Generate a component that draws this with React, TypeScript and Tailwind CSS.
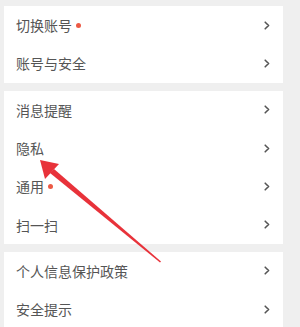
const sections: { label: string; dot?: boolean }[][] = [
  [{ label: '切换账号', dot: true }, { label: '账号与安全' }],
  [{ label: '消息提醒' }, { label: '隐私' }, { label: '通用', dot: true }, { label: '扫一扫' }],
  [{ label: '个人信息保护政策' }, { label: '安全提示' }],
];

function Chevron() {
  return (
    <svg width="6" height="9" viewBox="0 0 6 9" className="shrink-0">
      <path d="M1.2 1.2 L4.6 4.5 L1.2 7.8" fill="none" stroke="#555" strokeWidth="1.6" strokeLinecap="round" strokeLinejoin="round" />
    </svg>
  );
}

export default function App() {
  return (
    <div className="relative w-[300px] h-[327px] overflow-hidden bg-[#efefef] pt-[6px] pl-[4px] pr-[17px] font-['Noto_Sans_CJK_SC',sans-serif]">
      <div className="flex flex-col gap-[8px]">
        {sections.map((rows, i) => (
          <div key={i} className="bg-white flex flex-col">
            {rows.map((r) => (
              <div key={r.label} className="h-[38.3px] flex items-center pl-[12px] pr-[13px]">
                <span className="text-[14px] leading-none text-[#555]">{r.label}</span>
                {r.dot && <span className="ml-[4px] w-[5px] h-[5px] rounded-full bg-[#ec5a45]" />}
                <div className="flex-1" />
                <Chevron />
              </div>
            ))}
          </div>
        ))}
      </div>
      <svg className="absolute left-0 top-0" width="300" height="327" viewBox="0 0 300 327">
        <polygon points="40,160 59,164 45,179" fill="#e8323a" />
        <polygon points="54,169 161,261.5 160,262.5 50,173" fill="#e8323a" />
      </svg>
    </div>
  );
}
